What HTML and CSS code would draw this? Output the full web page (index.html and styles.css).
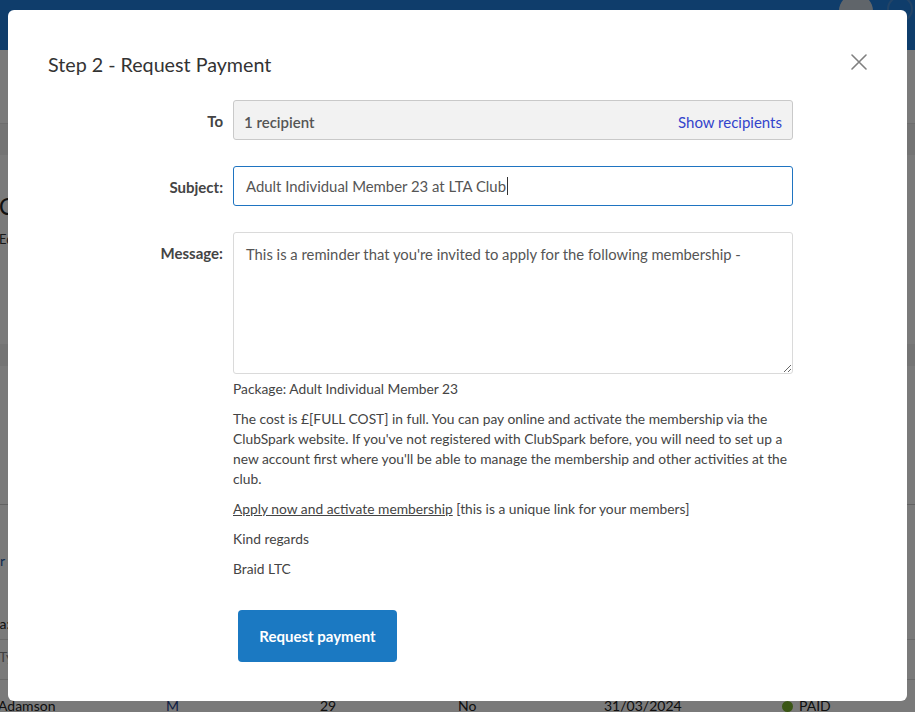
FILE: index.html
```html
<!DOCTYPE html>
<html lang="en">
<head>
<meta charset="utf-8">
<title>Request Payment</title>
<link rel="stylesheet" href="styles.css">
</head>
<body>
<div class="page">
  <header class="topbar">
    <span class="avatar"></span>
    <span class="avatar2"></span>
  </header>
  <div class="band band-a"></div>
  <div class="heading-bg">
    <div class="big">Overview</div>
    <div class="small">Edit details</div>
  </div>
  <div class="band band-b"></div>
  <div class="rule rule-a"></div>
  <div class="edge filter-bg"><span>Filter</span></div>
  <div class="edge label-bg"><span>Area:</span></div>
  <div class="rule"></div>
  <div class="type-bg">Type</div>
  <div class="rule"></div>
  <div class="table-row">
    <span>Adamson</span>
    <span class="blue">M</span>
    <span>29</span>
    <span>No</span>
    <span>31/03/2024</span>
    <span class="status"><i class="dot"></i>PAID</span>
  </div>
</div>

<div class="overlay"></div>

<div class="modal" role="dialog">
  <div class="modal-head">
    <h2 class="modal-title">Step 2 - Request Payment</h2>
    <button class="close" aria-label="Close">
      <svg width="16" height="16" viewBox="0 0 16 16"><path d="M1 1 L15 15 M15 1 L1 15" stroke="#808080" stroke-width="1.6" stroke-linecap="round" fill="none"/></svg>
    </button>
  </div>

  <div class="form">
    <label class="lbl">To</label>
    <div class="field field-to">
      <span class="recip">1 recipient</span>
      <a class="show" href="#">Show recipients</a>
    </div>

    <label class="lbl">Subject:</label>
    <div class="field field-subject">Adult Individual Member 23 at LTA Club<span class="caret"></span></div>

    <label class="lbl">Message:</label>
    <div class="msg-col">
      <textarea class="message" readonly>This is a reminder that you're invited to apply for the following membership -</textarea>
      <div class="body-text">
        <p>Package: Adult Individual Member 23</p>
        <p>The cost is £[FULL COST] in full. You can pay online and activate the membership via the ClubSpark website. If you've not registered with ClubSpark before, you will need to set up a new account first where you'll be able to manage the membership and other activities at the club.</p>
        <p><a class="apply" href="#">Apply now and activate membership</a> [this is a unique link for your members]</p>
        <p>Kind regards</p>
        <p>Braid LTC</p>
      </div>
      <button class="submit">Request payment</button>
    </div>
  </div>
</div>
</body>
</html>
```

FILE: styles.css
```css
* { box-sizing: border-box; }
html, body { margin: 0; padding: 0; }
body {
  width: 915px;
  height: 712px;
  overflow: hidden;
  font-family: Lato, "Open Sans", Arial, sans-serif;
  background: #fff;
  position: relative;
}

/* background page */
.page { width: 915px; height: 712px; overflow: hidden; color: #222; }
.topbar {
  height: 50px;
  background: #2080df;
  display: flex;
  justify-content: flex-end;
  gap: 14px;
  padding-right: 2px;
}
.avatar {
  width: 34px; height: 34px; border-radius: 50%;
  background: #c9d3de;
  margin-top: -6px;
}
.avatar2 {
  width: 26px; height: 26px; border-radius: 50%;
  border: 2px solid #4a8fd8;
  margin-top: -4px;
}
.band { height: 32px; background: #f3f3f3; border-top: 1px solid #e4e4e4; }
.band-a { margin-top: 73px; }
.heading-bg { padding-top: 38px; height: 189px; margin-left: -1px; }
.big { font-size: 23px; color: #222; line-height: 26px; }
.small { font-size: 13px; color: #333; margin-top: 12px; line-height: 16px; }
.band-b { height: 22px; border-top: 0; }
.rule { height: 1px; background: #ddd; }
.rule-a { margin-top: 138px; background: #ccc; }
.edge {
  width: 5px;
  display: flex;
  justify-content: flex-end;
  white-space: nowrap;
  font-size: 14px;
  line-height: 20px;
}
.filter-bg { color: #1c5aa8; margin-top: 46px; height: 20px; }
.label-bg { color: #222; margin-top: 43px; height: 25px; width: 10px; }
.type-bg { font-size: 14px; color: #888; margin-left: -1px; height: 39px; line-height: 33px; }
.table-row {
  display: grid;
  grid-template-columns: 168px 154px 138px 146px 178px 120px;
  font-size: 14px;
  color: #222;
  line-height: 20px;
  margin-left: -2px;
  margin-top: 16px;
}
.table-row .blue { color: #1c3f8c; }
.status { display: flex; align-items: center; gap: 6px; }
.dot { width: 11px; height: 11px; border-radius: 50%; background: #7bb52f; display: inline-block; }

.overlay {
  position: absolute; inset: 0;
  background: rgba(0,0,0,0.52);
}

/* modal */
.modal {
  position: absolute;
  left: 8px; top: 10px;
  width: 899px; height: 691px;
  background: #fff;
  border-radius: 6px;
  padding: 42px 114px 0 40px;
  color: #444;
}
.modal-head { display: flex; justify-content: space-between; align-items: flex-start; height: 48px; }
.modal-title {
  margin: 0;
  font-size: 19.7px;
  font-weight: 400;
  color: #333;
  line-height: 26px;
}
.close {
  border: 0; background: none; padding: 0;
  margin: 2px -74px 0 0;
  width: 16px; height: 16px;
  cursor: pointer;
}
.close svg { display: block; }

.form {
  display: grid;
  grid-template-columns: 175px 560px;
  column-gap: 10px;
  row-gap: 26px;
}
.lbl {
  text-align: right;
  font-weight: 700;
  font-size: 15px;
  color: #444;
  line-height: 20px;
  padding-top: 11px;
}
.field {
  height: 40px;
  border-radius: 3px;
  display: flex;
  align-items: center;
  font-size: 15px;
  color: #555;
}
.field-to {
  background: #f2f2f2;
  border: 1px solid #c9c9c9;
  justify-content: space-between;
  padding: 3px 10px 0 10px;
}
.recip { font-weight: 600; color: #555; }
.show { color: #3344cc; text-decoration: none; font-size: 15px; }
.field-subject {
  border: 1px solid #1f74c1;
  padding: 0 12px;
  font-size: 14.9px;
}
.caret { display: inline-block; width: 1px; height: 18px; background: #333; margin-left: 1px; }

.msg-col { display: flex; flex-direction: column; align-items: flex-start; }
.message {
  width: 560px;
  height: 142px;
  border: 1px solid #dadada;
  border-radius: 3px;
  padding: 11px 12px;
  font-family: Lato, "Open Sans", Arial, sans-serif;
  font-size: 14.8px;
  line-height: 20px;
  color: #555;
  resize: vertical;
  outline: none;
  margin: 0;
  display: block;
}
.body-text { margin-top: 5px; font-size: 13.8px; line-height: 20px; color: #444; }
.body-text p { margin: 0 0 10px 0; }
.apply { color: #444; text-decoration: underline; }
.submit {
  margin: 21px 0 0 5px;
  width: 159px;
  height: 52px;
  background: #1b79c2;
  border: 0;
  border-radius: 4px;
  color: #fff;
  font-family: Lato, "Open Sans", Arial, sans-serif;
  font-weight: 700;
  font-size: 15px;
  cursor: pointer;
}
```
